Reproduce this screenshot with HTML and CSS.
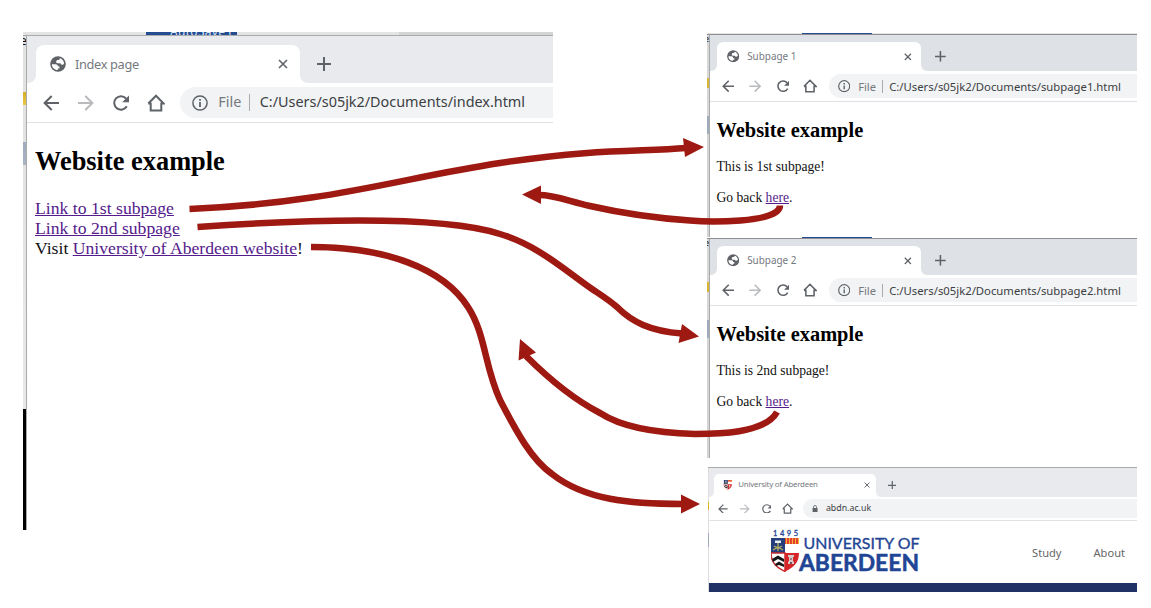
FILE: index.html
```
<!DOCTYPE html>
<html lang="en">
<head>
<meta charset="utf-8">
<title>Website example diagram</title>
<link rel="stylesheet" href="styles.css">
</head>
<body>
<svg class="defs" width="0" height="0">
  <symbol id="globe" viewBox="0 0 16 16"><circle cx="8" cy="8" r="7.800" fill="#5f6368"/><path d="M1.900 8.200h3.600c1.500 0 2.300.8 2.400 2.100h1.500v2.200H7.800v1.500c-3.300.1-6-2.500-5.900-5.800zM10.200 2.300c2 .8 3.600 2.600 3.900 4.900-.4 1-1.100 1.500-2 1.500-1 0-1.500-.6-1.700-1.400H7.500c-.9-.3-1.400-1-1.300-1.900.1-1 .8-1.500 1.800-1.500h1.200c.1-.8.400-1.300 1-1.600z" fill="#fff"/></symbol>
  <symbol id="close" viewBox="0 0 10 10"><path d="M1 1l8 8M9 1L1 9" stroke="currentColor" stroke-width="1.600"/></symbol>
  <symbol id="plus" viewBox="0 0 14 14"><path d="M7 0v14M0 7h14" stroke="currentColor" stroke-width="2"/></symbol>
  <symbol id="back" viewBox="0 0 16 16"><path d="M16 8H2M8.700 1L1.600 8l7.100 7" fill="none" stroke="currentColor" stroke-width="2"/></symbol>
  <symbol id="reload" viewBox="0 0 16 16"><path d="M13.800 11.200A6.700 6.700 0 1 1 13 3.500" fill="none" stroke="currentColor" stroke-width="2"/><path d="M16 .5v6.800H9.200z" fill="currentColor"/></symbol>
  <symbol id="home" viewBox="0 0 18 18"><path d="M3.700 9v7.500h10.600V9M1.300 9.500L9 1.700l7.700 7.800h-3.200M1.300 9.500h3.200" fill="none" stroke="currentColor" stroke-width="2"/></symbol>
  <symbol id="info" viewBox="0 0 16 16"><circle cx="8" cy="8" r="7.100" fill="none" stroke="currentColor" stroke-width="1.500"/><path d="M8 7v5M8 4v1.800" stroke="currentColor" stroke-width="1.800"/></symbol>
  <symbol id="lock" viewBox="0 0 12 16"><rect x="1" y="6" width="10" height="9" rx="1" fill="currentColor"/><path d="M3 6V4a3 3 0 0 1 6 0v2" fill="none" stroke="currentColor" stroke-width="1.600"/></symbol>
  <symbol id="crest" viewBox="0 0 28 34">
    <path d="M0 0h14v15H0z" fill="#253f7d"/><path d="M14 0h14v6H14z" fill="#e4322d"/><path d="M14 6h14v9H14z" fill="#fff"/>
    <path d="M15.500 0v6M18.500 0v6M21.500 0v6M24.500 0v6M27.500 0v6" stroke="#f3b63a" stroke-width="1.200"/>
    <path d="M0 15h14v18.500C7 30 0 26 0 15z" fill="#fff" stroke="#c52c2c" stroke-width="1.500"/><path d="M14 15h14c0 11-7 15-14 18.500z" fill="#d62528"/>
    <path d="M4 2.500h6v2.500H4z" fill="#e9edf2"/><path d="M7 5v8M3 8l4 2 4-2M2 12l5-3 5 3" stroke="#b2ae65" stroke-width="1.300" fill="none"/>
    <path d="M1 21l6-3.500 6 3.500v3l-6-3-5 3zM4 26l4-2.500 5 3v2.500l-5-2-3 1z" fill="#171717"/>
    <path d="M17 26v-2l1-1v-4h-1v-2h6v2h-1v4l1 1v2z" fill="#d8c9c9"/><path d="M19.500 20h1v2h-1zM19.200 24h1.600v2h-1.600z" fill="#633"/>
  </symbol>
</svg>

<main class="canvas">
  <section class="window index">
    <div class="behind-top"><span class="ribbon">AutoSave (</span></div>
    <div class="behind-left"><span class="sliver">e</span></div>
    <div class="browser">
      <div class="tabbar">
        <div class="lead"></div>
        <div class="tabwrap"><div class="tab"><svg class="favicon"><use href="#globe"/></svg><span class="title">Index page</span><svg class="close"><use href="#close"/></svg></div></div>
        <div class="rest"><svg class="plus"><use href="#plus"/></svg></div>
      </div>
      <div class="toolbar">
        <svg class="nav"><use href="#back"/></svg><svg class="nav forward"><use href="#back"/></svg><svg class="nav"><use href="#reload"/></svg><svg class="nav homeicon"><use href="#home"/></svg>
        <div class="omnibox"><svg class="info"><use href="#info"/></svg><span class="scheme">File</span><span class="url">C:/Users/s05jk2/Documents/index.html</span></div>
      </div>
      <div class="page">
        <h1>Website example</h1>
        <div class="links"><div><a>Link to 1st subpage</a></div><div><a>Link to 2nd subpage</a></div><div>Visit <a>University of Aberdeen website</a>!</div></div>
      </div>
    </div>
  </section>

  <section class="window sub first">
    <div class="behind-top"><span class="ribbon"></span></div>
    <div class="behind-left"><span class="sliver">e</span></div>
    <div class="browser">
      <div class="tabbar">
        <div class="lead"></div>
        <div class="tabwrap"><div class="tab"><svg class="favicon"><use href="#globe"/></svg><span class="title">Subpage 1</span><svg class="close"><use href="#close"/></svg></div></div>
        <div class="rest"><svg class="plus"><use href="#plus"/></svg></div>
      </div>
      <div class="toolbar">
        <svg class="nav"><use href="#back"/></svg><svg class="nav forward"><use href="#back"/></svg><svg class="nav"><use href="#reload"/></svg><svg class="nav homeicon"><use href="#home"/></svg>
        <div class="omnibox"><svg class="info"><use href="#info"/></svg><span class="scheme">File</span><span class="url">C:/Users/s05jk2/Documents/subpage1.html</span></div>
      </div>
      <div class="page"><h1>Website example</h1><p>This is 1st subpage!</p><p>Go back <a>here</a>.</p></div>
    </div>
  </section>

  <section class="window sub second">
    <div class="behind-top"><span class="ribbon"></span></div>
    <div class="behind-left"><span class="sliver">e</span></div>
    <div class="browser">
      <div class="tabbar">
        <div class="lead"></div>
        <div class="tabwrap"><div class="tab"><svg class="favicon"><use href="#globe"/></svg><span class="title">Subpage 2</span><svg class="close"><use href="#close"/></svg></div></div>
        <div class="rest"><svg class="plus"><use href="#plus"/></svg></div>
      </div>
      <div class="toolbar">
        <svg class="nav"><use href="#back"/></svg><svg class="nav forward"><use href="#back"/></svg><svg class="nav"><use href="#reload"/></svg><svg class="nav homeicon"><use href="#home"/></svg>
        <div class="omnibox"><svg class="info"><use href="#info"/></svg><span class="scheme">File</span><span class="url">C:/Users/s05jk2/Documents/subpage2.html</span></div>
      </div>
      <div class="page"><h1>Website example</h1><p>This is 2nd subpage!</p><p>Go back <a>here</a>.</p></div>
    </div>
  </section>

  <section class="window uni">
    <div class="behind-top"></div>
    <div class="behind-left"></div>
    <div class="browser">
      <div class="tabbar">
        <div class="lead"></div>
        <div class="tabwrap"><div class="tab"><svg class="favicon"><use href="#crest"/></svg><span class="title">University of Aberdeen</span><svg class="close"><use href="#close"/></svg></div></div>
        <div class="rest"><svg class="plus"><use href="#plus"/></svg></div>
      </div>
      <div class="toolbar">
        <svg class="nav"><use href="#back"/></svg><svg class="nav forward"><use href="#back"/></svg><svg class="nav"><use href="#reload"/></svg><svg class="nav homeicon"><use href="#home"/></svg>
        <div class="omnibox"><svg class="lock"><use href="#lock"/></svg><span class="url">abdn.ac.uk</span></div>
      </div>
      <div class="masthead">
        <svg class="logo" viewBox="0 0 150 46" width="150" height="46">
          <use href="#crest" x="0" y="9" width="28" height="34"/>
          <g font-family="Lato, sans-serif" fill="#1f4594" stroke="#1f4594">
            <text x="2" y="7" font-size="7.500" stroke-width=".3" textLength="25">1495</text>
            <text x="32.500" y="19.500" font-size="16" stroke-width=".35" textLength="116" lengthAdjust="spacingAndGlyphs">UNIVERSITY OF</text>
            <text x="28" y="41.500" font-size="22.500" stroke-width=".5" font-weight="700" textLength="120" lengthAdjust="spacingAndGlyphs">ABERDEEN</text>
          </g>
        </svg>
        <nav class="menu"><span>Study</span><span>About</span></nav>
      </div>
      <div class="band"></div>
    </div>
  </section>

  <svg class="arrows" viewBox="0 0 1151 608">
    <g fill="none" stroke="#9e1911" stroke-width="6.500">
      <path d="M189.500 209C330 203 400 178 500 163S640 152 686 148"/>
      <path d="M780 205.500C780 224 705 222 690 220.500C640 217 612 211 590 206C568 201 555 195 539 195"/>
      <path d="M197.500 227C300 220 440 215 500 234C538 245 567 272 592 289C604 297 609 300 617 307C632 322 650 331 682 333.500"/>
      <path d="M777 412C765 434 715 434 695 434C655 433 620 426 600 413C575 400 550 380 526 356"/>
      <path d="M311 247C385 247 443 268 468 307C486 335 484 365 500 400C517 433 532 460 552 474C585 500 630 504 683 504"/>
    </g>
    <g fill="#9e1911"><path d="M683 138l21 9-19 10z"/><path d="M541 185.500v18.500l-19-9.500z"/><path d="M682 324l17 12.500-20.500 6.500z"/><path d="M520 339l16 13.500-17.500 8z"/><path d="M681 494.500v19l19-9.500z"/></g>
  </svg>
</main>
</body>
</html>
```
FILE: styles.css
```
body { margin: 0; background: #fff; }
.defs { display: block; }
.canvas { position: relative; width: 1151px; height: 608px; overflow: hidden; }
.arrows { position: absolute; left: 0; top: 0; width: 1151px; height: 608px; }

.window {
  position: absolute;
  display: grid;
  grid-template-rows: 4px 1fr;
  box-sizing: border-box;
  overflow: hidden;
  font-family: "Noto Sans", "Open Sans", sans-serif;
  --bar: #e8eaed;
  --s: 1;
  color: #5f6368;
}
.index { left: 23px; top: 32px; width: 530px; height: 498px; grid-template-columns: 4px 1fr; }
.sub { left: 707px; width: 430px; height: 221px; --s: .775; --bar: #dee1e6; grid-template-columns: 3px 1fr; grid-template-rows: 2px 1fr; }
.first { top: 33px; height: 204px; }
.second { top: 237px; }
.uni { left: 708px; top: 467px; width: 429px; height: 125px; --s: .612; grid-template-columns: 1px 1fr; grid-template-rows: 1px 1fr; }

.behind-top { grid-column: 1 / 3; box-sizing: border-box; border-bottom: 1px solid #aaa; background: #e4e4e4; overflow: hidden; }
.sub .behind-top { border-color: #8d8e92; }
.second .behind-top { background: #fff; }
.index .behind-top { background: linear-gradient(90deg, #e4e4e4 376px, #d5d5d5 376px); }
.ribbon { display: block; height: 3px; width: 91px; margin-left: 123px; padding-left: 24px; box-sizing: border-box; background: #234c91; color: #dbe5f5; font-size: 12px; line-height: 0; letter-spacing: .3px; }
.sub .ribbon { width: 70px; margin-left: 95px; padding-left: 18px; font-size: 9.500px; height: 1px; }
.behind-left {
  overflow: hidden;
  border-right: 1px solid #aaa;
  background: linear-gradient(#e2e2e2 56px, #d7ad25 56px, #e8cb45 69px, #e2e2e2 69px, #e2e2e2 106px, #9eacbd 106px, #a9b5c6 129px, #e2e2e2 129px, #e8e8e8 373px, #000 373px);
}
.sub .behind-left { background: linear-gradient(#d7d7d7 43px, #d9b532 43px, #d9b532 53px, #d7d7d7 53px, #d7d7d7 81px, #9eacbd 81px, #9eacbd 99px, #d4d4d4 99px); }
.uni .behind-left { background: linear-gradient(#ddd 34px, #d9b532 34px, #d9b532 42px, #ddd 42px, #ddd 65px, #9eacbd 65px, #9eacbd 79px, #ddd 79px); border: 0; }
.sliver { display: block; margin: 0 0 0 -3px; font-size: 12px; line-height: 10px; color: #111; }
.sub .sliver { font-size: 9px; line-height: 8px; }

.browser { display: flex; flex-direction: column; background: #fff; min-width: 0; }
.tabbar { display: flex; flex: none; height: calc(47px * var(--s)); }
.lead { width: calc(8.500px * var(--s)); background: var(--bar); border-bottom-right-radius: calc(8px * var(--s)); }
.tabwrap { width: calc(264px * var(--s)); padding-top: calc(9px * var(--s)); box-sizing: border-box; background: linear-gradient(var(--bar) 60%, #fff 60%); }
.tab { display: flex; align-items: center; height: calc(38px * var(--s)); background: #fff; border-radius: calc(8px * var(--s)) calc(8px * var(--s)) 0 0; padding: 0 calc(12px * var(--s)) 0 calc(14px * var(--s)); box-sizing: border-box; }
.uni .tab { padding-right: 6px; }
.rest { flex: 1; display: flex; align-items: center; padding: calc(9px * var(--s)) 0 0 calc(17.500px * var(--s)); box-sizing: border-box; background: var(--bar); border-bottom-left-radius: calc(8px * var(--s)); }
.uni .rest { padding-left: 12px; }
.favicon { width: calc(16px * var(--s)); height: calc(16px * var(--s)); margin-right: calc(9.500px * var(--s)); flex: none; }
.title { flex: 1; font-size: calc(12.800px * var(--s)); line-height: 1; white-space: nowrap; color: #75797e; letter-spacing: calc(-.35px * var(--s)); }
.sub .title { letter-spacing: 0; }
.close { width: calc(10px * var(--s)); height: calc(10px * var(--s)); }
.plus { width: calc(14px * var(--s)); height: calc(14px * var(--s)); }

.toolbar { display: flex; flex: none; align-items: center; height: calc(40px * var(--s)); box-sizing: border-box; border-bottom: 1px solid #dfe1e4; padding-left: calc(15.500px * var(--s)); gap: calc(19.200px * var(--s)); }
.nav { flex: none; width: calc(16px * var(--s)); height: calc(16px * var(--s)); }
.homeicon { width: calc(18px * var(--s)); height: calc(18px * var(--s)); margin-left: calc(-1px * var(--s)); }
.forward { transform: scaleX(-1); color: #b8babd; }
.omnibox { flex: 1; display: flex; align-items: center; height: calc(31px * var(--s)); margin-left: calc(-4px * var(--s)); background: #f1f3f4; border-radius: calc(16px * var(--s)) 0 0 calc(16px * var(--s)); padding-left: calc(12px * var(--s)); white-space: nowrap; font-size: calc(14.400px * var(--s)); line-height: 1; }
.info { width: calc(16px * var(--s)); height: calc(16px * var(--s)); flex: none; }
.scheme { margin-left: calc(10px * var(--s)); width: calc(31px * var(--s)); padding: calc(1px * var(--s)) 0; border-right: 1px solid #a9abae; color: #75797e; }
.url { margin-left: calc(9.500px * var(--s)); color: #3c4043; }
.sub .url { font-size: 11.300px; margin-left: 6px; }
.uni .omnibox { padding-left: 9px; }
.lock { width: calc(10px * var(--s)); height: calc(13px * var(--s)); flex: none; }
.uni .url { margin-left: 8px; }

.page { font-family: "Liberation Serif", "Times New Roman", serif; color: #111; padding-left: 8px; }
.page h1 { margin: 22px 0 0; font-size: 26.400px; line-height: 32px; color: #000; white-space: nowrap; }
.page a { color: #551a8b; text-decoration: underline; }
.links { margin-top: 21px; font-size: 17.680px; line-height: 20px; }
.sub .page { padding-left: 6.500px; font-size: 13.600px; }
.sub h1 { margin-top: 16px; font-size: 20.400px; line-height: 24px; }
.sub p { margin: 15px 0 0; line-height: 16px; }
.sub h1 + p { margin-top: 17px; }

.masthead { flex: 1; display: flex; justify-content: space-between; padding: 8px 12px 0 62px; }
.logo { flex: none; overflow: visible; }
.menu { display: flex; gap: 32px; padding-top: 15px; font-size: 11.100px; line-height: 18px; color: #666; }
.band { flex: none; height: 9px; background: #203165; }
```
